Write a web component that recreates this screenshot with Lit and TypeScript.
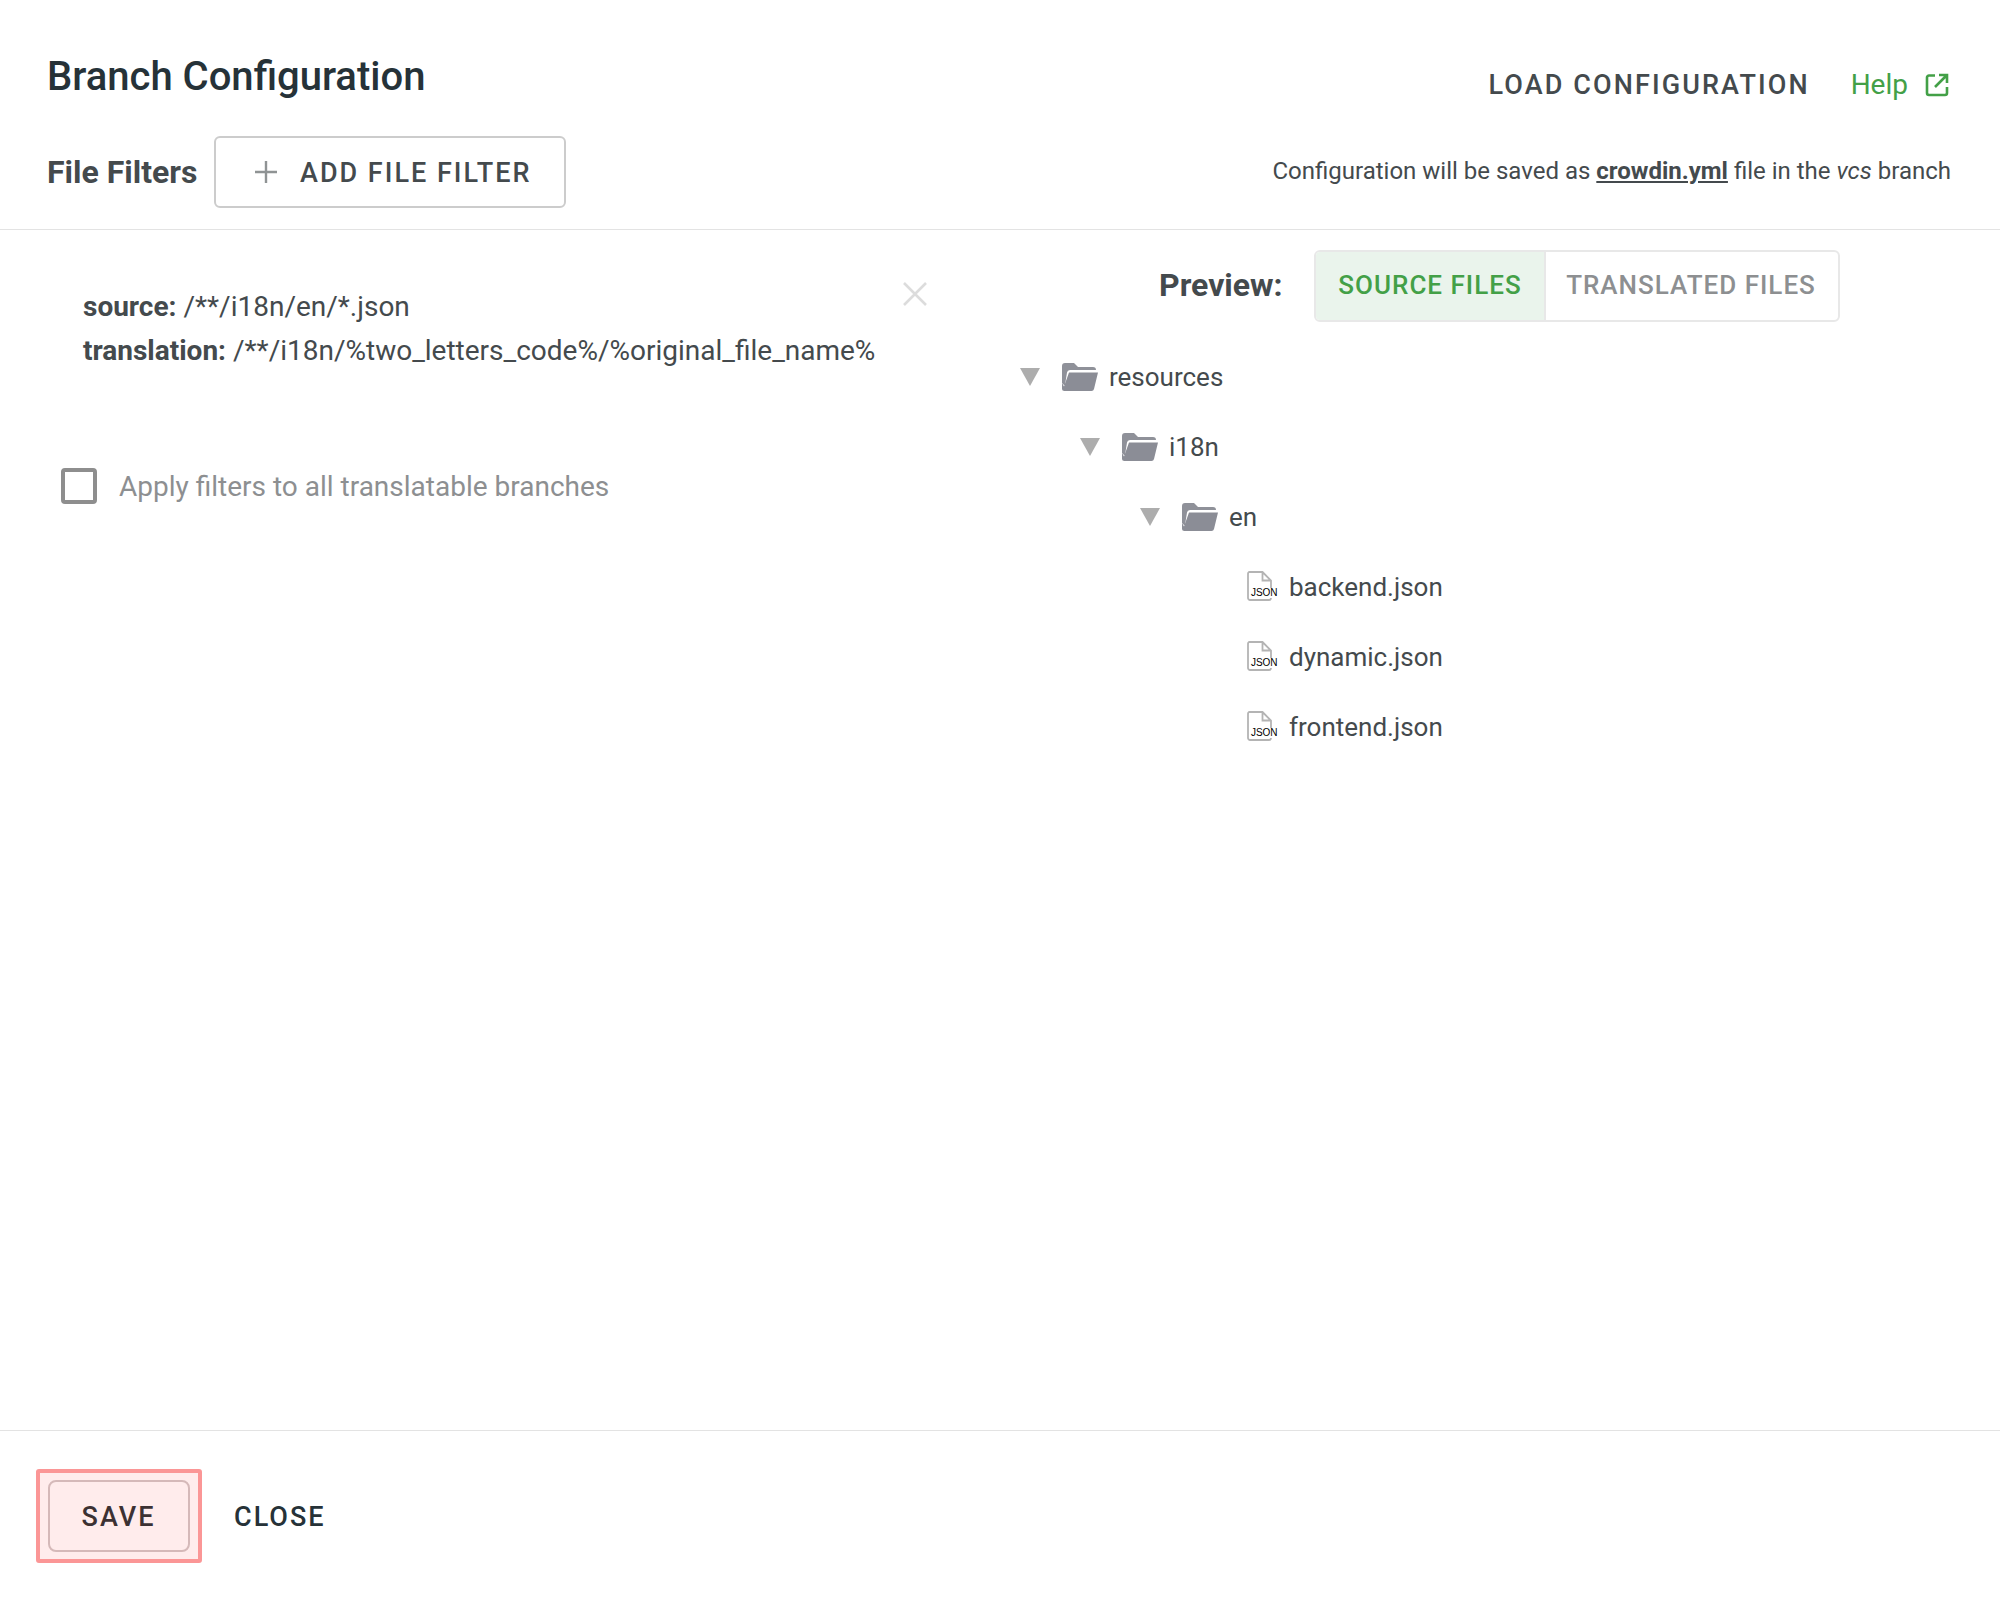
import { LitElement, html, css } from "lit";
import { customElement } from "lit/decorators.js";

const folder = html`<svg class="folder" viewBox="0 0 36 28" width="36" height="28"><path d="M0 3a3 3 0 0 1 3-3h9l4 4h15a3 3 0 0 1 3 3H8a3 3 0 0 0-3 2.500L3 22H2l-2-2z" fill="#8f9199"/><path d="M7 9.500h29L32 26a2.600 2.600 0 0 1-2.500 2H2.500a2.500 2.500 0 0 1-2.500-2.500V20l2 3.500z" fill="#8b8d96"/></svg>`;
const caret = html`<svg class="caret" viewBox="0 0 20 18" width="20" height="18"><path d="M0 0h20L10 18z" fill="#adadad"/></svg>`;
const jsonIcon = html`<span class="json"><svg viewBox="0 0 30 30" width="30" height="30"><path d="M2 1h13.500l8.500 8.500V27a2 2 0 0 1-2 2H3a2 2 0 0 1-2-2V3a2 2 0 0 1 1-2zM15.500 1.500V9.500h8" fill="none" stroke="#b4b4b4" stroke-width="1.800"/></svg><span class="json-t">JSON</span></span>`;

@customElement("app-root")
export class AppRoot extends LitElement {
  static styles = css`
    :host { display: flex; flex-direction: column; width: 2000px; height: 1600px; background: #fff; font-family: Roboto, sans-serif; color: #444a4d; }
    .head { height: 229px; border-bottom: 1px solid #e3e3e3; box-sizing: content-box; padding: 0 49px 0 47px; display: flex; flex-direction: column; }
    .row1 { display: flex; justify-content: space-between; height: 136px; align-items: flex-start; }
    h1 { margin: 52px 0 0; font-size: 40px; line-height: 50px; font-weight: 500; color: #263238; }
    .actions { display: flex; align-items: center; margin-top: 62px; height: 46px; }
    .load { font-size: 27px; font-weight: 500; letter-spacing: 2.1px; color: #444a4d; }
    .help { font-size: 28px; color: #43a047; margin: -2px 17px 0 41px; }
    .ext { display: block; margin-right: 2px; }
    .row2 { display: flex; justify-content: space-between; align-items: center; height: 72px; }
    .ff { display: flex; align-items: center; }
    .fflabel { font-size: 32px; font-weight: 700; color: #444a4d; width: 167px; }
    .add { display: flex; align-items: center; width: 352px; height: 72px; box-sizing: border-box; border: 2px solid #ccc; border-radius: 6px; font-size: 27px; font-weight: 500; letter-spacing: 2px; padding: 2px 0 0 38px; color: #444a4d; }
    .add svg { margin: -2px 22px 0 0; }
    .note { font-size: 24px; color: #444a4d; margin-top: -3px; }
    .note b { font-weight: 700; text-decoration: underline; }
    .body { flex: 1; display: flex; }
    .left { width: 1000px; position: relative; padding: 0 0 0 48px; box-sizing: border-box; }
    .rule { position: relative; padding: 55px 0 0 35px; font-size: 28px; line-height: 44px; height: 183px; color: #444a4d; }
    .rule b { font-weight: 700; }
    .x { position: absolute; left: 855px; top: 52px; }
    .apply { display: flex; align-items: center; font-size: 28px; color: #8d8f91; }
    .box { width: 36px; height: 36px; box-sizing: border-box; border: 4px solid #8e8e8e; border-radius: 4px; margin-right: 22px; margin-left: 13px; }
    .right { flex: 1; display: flex; flex-direction: column; }
    .pv { display: flex; align-items: center; margin-top: 20px; padding-left: 159px; }
    .pv span.l { font-size: 32px; font-weight: 700; width: 155px; color: #444a4d; margin-top: -2px; }
    .seg { display: flex; height: 72px; width: 526px; box-sizing: border-box; border: 2px solid #e8e8e8; border-radius: 6px; overflow: hidden; font-size: 26px; font-weight: 500; letter-spacing: 1px; }
    .seg div { display: flex; align-items: center; justify-content: center; padding-bottom: 2px; box-sizing: border-box; }
    .on { width: 230px; background: #eaf4ec; color: #43a047; border-right: 2px solid #e8e8e8; }
    .off { flex: 1; color: #8d8f91; padding-right: 2px; }
    .tree { margin-top: 20px; font-size: 26px; color: #444a4d; }
    .node { display: flex; align-items: center; height: 70px; }
    .caret { margin-right: 22px; }
    .folder { margin-right: 11px; }
    .json { position: relative; width: 30px; height: 30px; margin: -2px 12px 0 0; display: block; }
    .json svg { display: block; }
    .json-t { position: absolute; left: 4px; bottom: 3px; font-family: "Liberation Sans", sans-serif; font-size: 10px; color: #000; letter-spacing: -0.1px; background: #fff; line-height: 10px; padding-right: 1px; }
    .foot { height: 170px; box-sizing: border-box; border-top: 1px solid #e3e3e3; display: flex; align-items: flex-start; padding: 38px 0 0 36px; }
    .focus { width: 166px; height: 94px; box-sizing: border-box; border: 4px solid #fb9696; border-radius: 3px; background: #ffecec; padding: 7px 8px; }
    .save { height: 72px; box-sizing: border-box; border: 2px solid #d5b9b9; border-radius: 8px; display: flex; align-items: center; justify-content: center; font-size: 27px; font-weight: 500; letter-spacing: 2px; color: #3c3133; padding: 2px 1px 0 0; }
    .close { margin-left: 32px; height: 95px; display: flex; align-items: center; font-size: 27px; font-weight: 500; letter-spacing: 2px; color: #263238; }
  `;

  node(indent: number, label: string, kind: "dir" | "file") {
    return html`<div class="node" style="padding-left:${indent}px">
      ${kind === "dir" ? html`${caret}${folder}` : jsonIcon}<span>${label}</span></div>`;
  }

  render() {
    return html`
      <div class="head">
        <div class="row1">
          <h1>Branch Configuration</h1>
          <div class="actions">
            <span class="load">LOAD CONFIGURATION</span>
            <span class="help">Help</span>
            <svg class="ext" width="24" height="24" viewBox="0 0 24 24" fill="none" stroke="#43a047" stroke-width="2.600"><path d="M10 2.500H4A2 2 0 0 0 2 4.500V20a2 2 0 0 0 2 2h16a2 2 0 0 0 2-2v-6M14 2h8v8M22 2 10 14"/></svg>
          </div>
        </div>
        <div class="row2">
          <div class="ff">
            <span class="fflabel">File Filters</span>
            <div class="add"><svg width="24" height="24" viewBox="0 0 24 24" stroke="#8f9394" stroke-width="2.400"><path d="M12 1v22M1 12h22"/></svg>ADD FILE FILTER</div>
          </div>
          <div class="note">Configuration will be saved as <b>crowdin.yml</b> file in the <i>vcs</i> branch</div>
        </div>
      </div>
      <div class="body">
        <div class="left">
          <div class="rule">
            <div><b>source:</b> /**/i18n/en/*.json</div>
            <div><b>translation:</b> /**/i18n/%two_letters_code%/%original_file_name%</div>
            <svg class="x" width="24" height="24" viewBox="0 0 24 24" stroke="#dcdcdc" stroke-width="2.600"><path d="M1 1l22 22M23 1 1 23"/></svg>
          </div>
          <label class="apply"><span class="box"></span>Apply filters to all translatable branches</label>
        </div>
        <div class="right">
          <div class="pv"><span class="l">Preview:</span>
            <div class="seg"><div class="on">SOURCE FILES</div><div class="off">TRANSLATED FILES</div></div>
          </div>
          <div class="tree">
            ${this.node(20, "resources", "dir")}
            ${this.node(80, "i18n", "dir")}
            ${this.node(140, "en", "dir")}
            ${this.node(247, "backend.json", "file")}
            ${this.node(247, "dynamic.json", "file")}
            ${this.node(247, "frontend.json", "file")}
          </div>
        </div>
      </div>
      <div class="foot">
        <div class="focus"><div class="save">SAVE</div></div>
        <div class="close">CLOSE</div>
      </div>
    `;
  }
}
